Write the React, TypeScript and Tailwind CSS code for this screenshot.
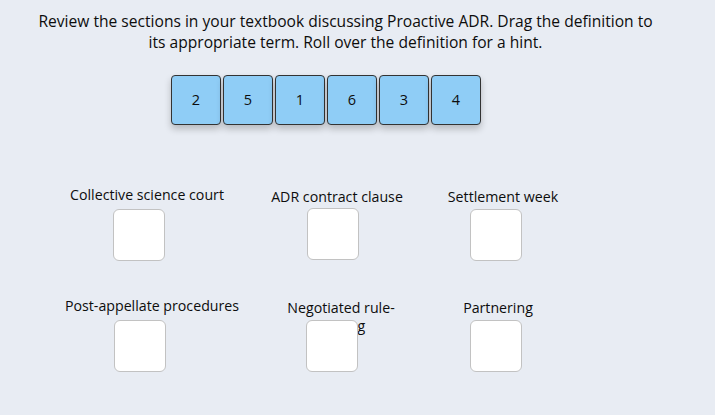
import React from "react";

const cards = ["2", "5", "1", "6", "3", "4"];

function Box({ ml, mt }: { ml: string; mt: string }) {
  return (
    <div
      className={`relative w-[52px] h-[52px] bg-white border border-[#c2c2c2] rounded-[6px] ${ml} ${mt}`}
    />
  );
}

export default function App() {
  return (
    <div
      className="w-[715px] h-[415px] bg-[#e8ecf3] text-[#0d0d0d] overflow-hidden"
      style={{ fontFamily: '"Open Sans", "Noto Sans", sans-serif' }}
    >
      <div className="w-[691px] pt-[11px] text-center text-[15.6px] leading-[21px]">
        Review the sections in your textbook discussing Proactive ADR. Drag the definition to
        <br />
        its appropriate term. Roll over the definition for a hint.
      </div>

      <div className="flex gap-[2px] ml-[171px] mt-[22px]">
        {cards.map((c) => (
          <div
            key={c}
            className="w-[50px] h-[50px] bg-[#8fcdf6] border border-[#333] rounded-[4px] flex items-center justify-center text-[14.5px] shadow-[0_4px_7px_rgba(0,0,0,0.22)]"
          >
            {c}
          </div>
        ))}
      </div>

      {/* Row 1 */}
      <div className="flex mt-[61px] text-[14.2px] leading-[18px]">
        <div className="w-[240px] shrink-0">
          <div className="ml-[57px] w-[180px] h-[18px] text-center">Collective science court</div>
          <Box ml="ml-[113px]" mt="mt-[5px]" />
        </div>
        <div className="w-[180px] shrink-0">
          <div className="ml-[22px] w-[150px] h-[18px] mt-[2px] text-center">ADR contract clause</div>
          <Box ml="ml-[67px]" mt="mt-[2px]" />
        </div>
        <div className="w-[200px] shrink-0">
          <div className="ml-[8px] w-[150px] h-[18px] mt-[2px] text-center">Settlement week</div>
          <Box ml="ml-[50px]" mt="mt-[3px]" />
        </div>
      </div>

      {/* Row 2 */}
      <div className="flex mt-[36px] text-[14.2px] leading-[18px]">
        <div className="w-[240px] shrink-0">
          <div className="ml-[52px] w-[200px] h-[18px] text-center">Post-appellate procedures</div>
          <Box ml="ml-[114px]" mt="mt-[5px]" />
        </div>
        <div className="w-[180px] shrink-0">
          <div className="ml-[41px] w-[120px] h-[18px] mt-[2px] text-center">Negotiated rule-making</div>
          <Box ml="ml-[66px]" mt="mt-[3px]" />
        </div>
        <div className="w-[200px] shrink-0">
          <div className="ml-[3px] w-[150px] h-[18px] mt-[2px] text-center">Partnering</div>
          <Box ml="ml-[50px]" mt="mt-[3px]" />
        </div>
      </div>
    </div>
  );
}
